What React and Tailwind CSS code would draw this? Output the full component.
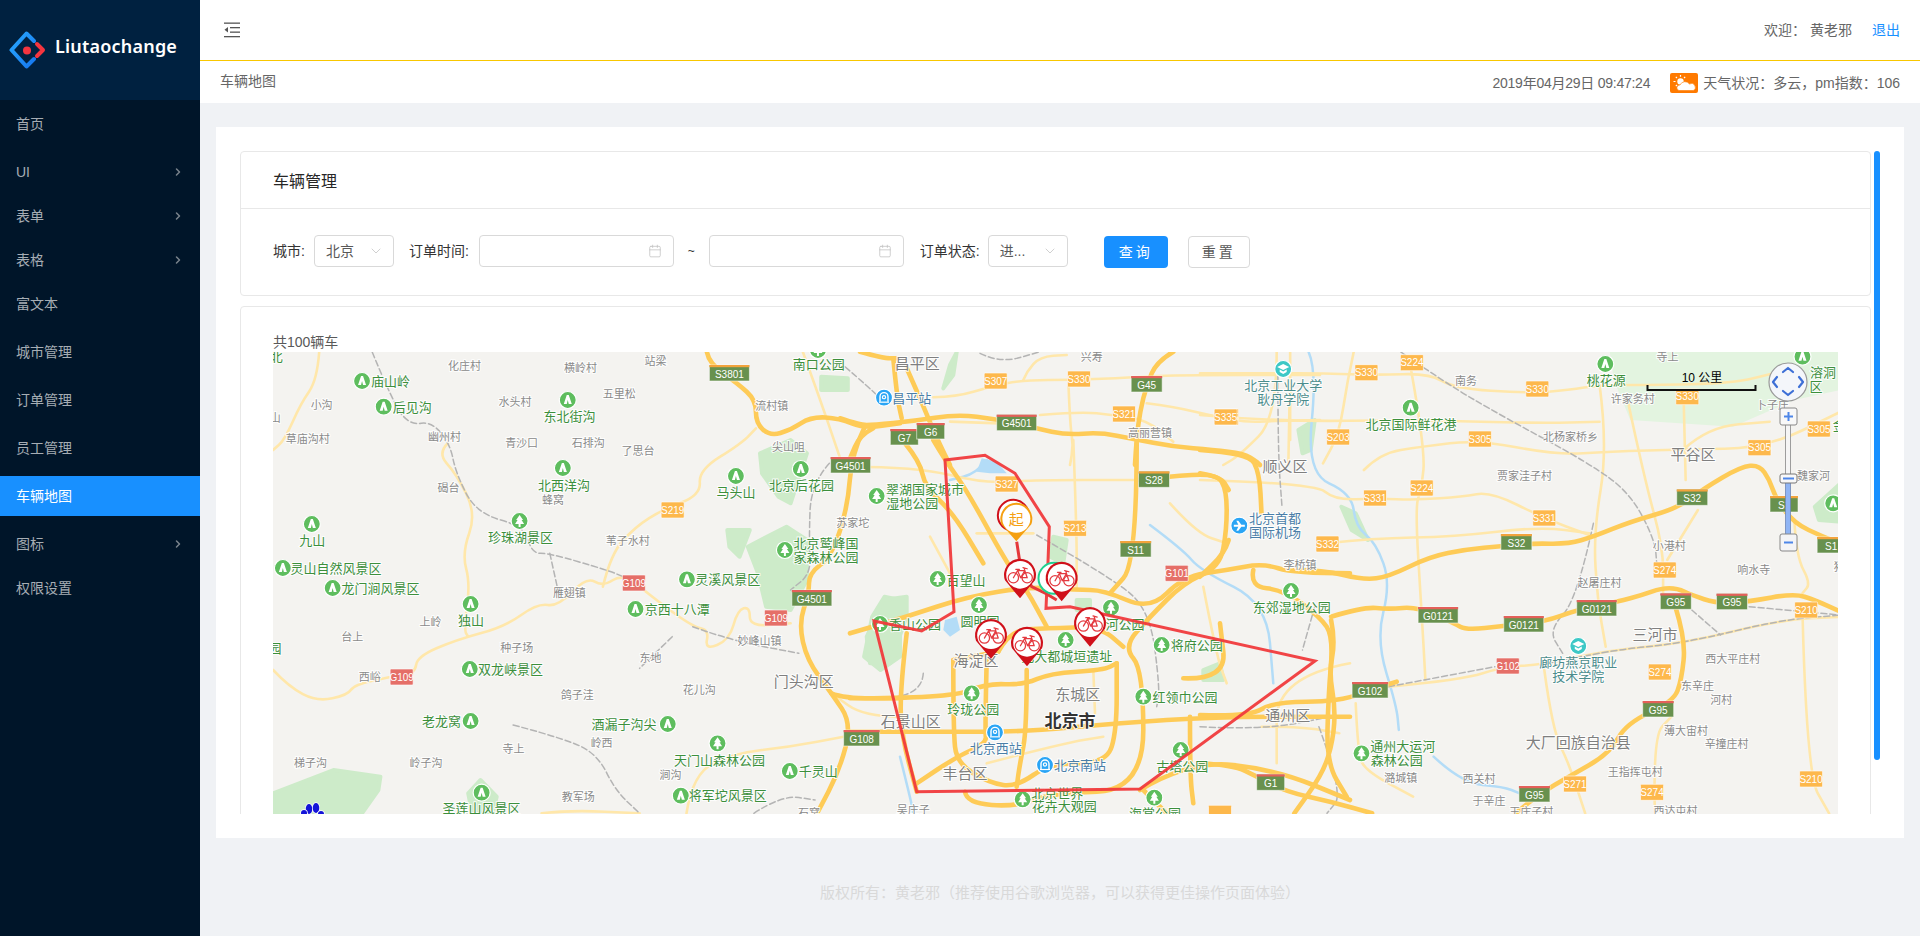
import { Calendar, ChevronDown, ChevronRight } from "lucide-react";

const menu = [
  { label: "首页", gap: "mb-2" },
  { label: "UI", arrow: true, gap: "mb-1" },
  { label: "表单", arrow: true, gap: "mb-1" },
  { label: "表格", arrow: true, gap: "mb-1" },
  { label: "富文本", gap: "mb-2" },
  { label: "城市管理", gap: "mb-2" },
  { label: "订单管理", gap: "mb-2" },
  { label: "员工管理", gap: "mb-2" },
  { label: "车辆地图", gap: "mb-2", active: true },
  { label: "图标", arrow: true, gap: "mb-1" },
  { label: "权限设置", gap: "mb-2" },
];

// the map is drawn in page pixels, read off four crops of the reference
const sheets = {
  a: { ox: 260, oy: 340, sx: 2.45 },
  b: { ox: 850, oy: 430, sx: 3 },
  c: { ox: 1200, oy: 340, sx: 2.44 },
  d: { ox: 840, oy: 345, sx: 3 },
};
const px = (s, x) => sheets[s].ox + x / sheets[s].sx;
const py = (s, y) => sheets[s].oy + y / 3;
const toPoints = (s, str) =>
  str
    .trim()
    .split(/\s+/)
    .map((p) => {
      const [x, y] = p.split(",").map(Number);
      return [px(s, x), py(s, y)];
    });
const pts = (s, str) =>
  toPoints(s, str)
    .map(([x, y]) => `${x.toFixed(1)},${y.toFixed(1)}`)
    .join(" ");

// rounds the corners of a polyline by curving through the segment midpoints
const curve = (s, str) => {
  const p = toPoints(s, str);
  if (p.length < 3) return `M${p[0][0]} ${p[0][1]} L${p[1][0]} ${p[1][1]}`;
  let d = `M${p[0][0].toFixed(1)} ${p[0][1].toFixed(1)}`;
  for (let i = 1; i < p.length - 1; i++) {
    const mx = (p[i][0] + p[i + 1][0]) / 2;
    const my = (p[i][1] + p[i + 1][1]) / 2;
    d += ` Q${p[i][0].toFixed(1)} ${p[i][1].toFixed(1)} ${mx.toFixed(1)} ${my.toFixed(1)}`;
  }
  const last = p[p.length - 1];
  return `${d} L${last[0].toFixed(1)} ${last[1].toFixed(1)}`;
};

const greens = [
  ["a", "1225,340 1300,300 1340,340 1300,490 1270,470 1230,400"],
  ["a", "1145,570 1200,570 1175,650 1150,620"],
  ["a", "1195,620 1290,560 1340,600 1340,720 1300,810 1240,800 1220,700"],
  ["a", "1500,830 1480,950 1520,990 1568,950 1568,780 1530,770"],
  ["a", "1375,110 1440,115 1440,150 1375,150"],
  ["a", "32,1360 180,1290 295,1310 290,1350 250,1420 32,1420"],
  ["a", "510,1360 540,1320 580,1370 570,1420 520,1420"],
  ["b", "100,510 170,500 170,560 120,700 60,700 50,620"],
  ["b", "1060,720 1110,700 1120,750 1060,750"],
  ["b", "610,320 650,330 640,400 600,380"],
  ["b", "680,510 720,510 720,550 680,540"],
  ["c", "1500,500 1563,430 1563,545 1510,540"],
  ["c", "240,270 280,240 270,330 250,340"],
  ["c", "345,500 380,520 410,600 370,570"],
  ["d", "310,130 330,60 350,22 340,90"],
];
const paleGreen = "1000,36 1563,36 1563,150 1450,180 1300,260 1050,240 1010,120";

const lakes = [
  ["b", "285,570 320,560 330,600 300,620 280,600"],
  ["b", "395,85 440,95 470,130 420,130 380,125"],
];

const rivers = [
  ["b", "410,90 380,130 300,150"],
  ["b", "900,285 1000,360 1050,420 1250,520 1270,760"],
  ["b", "150,980 180,1100 190,1150"],
  ["c", "265,36 285,90 260,400 370,460 380,560 430,610 465,730 430,900 480,1100 485,1170"],
  ["c", "570,1250 640,1330 740,1340 780,1360"],
];

const minorRoads = [
  ["a", "145,36 140,120 100,190 60,300 32,330"],
  ["a", "32,990 70,1040 140,1085 215,1065 230,1035 320,1010 380,1000 385,950 480,900 600,860 680,790 730,800 800,710 840,740 890,700 960,770 1060,860 1100,870 1090,930 1150,900 1170,810 1200,800 1200,860 1300,850"],
  ["a", "460,310 435,340 480,400 530,520 495,640 515,730 500,870 510,890"],
  ["a", "840,740 860,640 920,560 985,510 1080,465 1075,390 1180,310 1215,265"],
  ["a", "1330,36 1370,170 1420,350"],
  ["a", "1568,1130 1480,1130 1400,1060"],
  ["a", "1045,1420 1060,1300 1160,1240 1300,1220 1430,1190"],
  ["a", "690,1420 760,1410 930,1420"],
  ["b", "0,110 200,110 400,160 540,150 860,150"],
  ["b", "670,30 680,300 680,480"],
  ["b", "240,320 300,430"],
  ["b", "380,310 550,310"],
  ["b", "960,220 1040,310 1130,340"],
  ["b", "1060,470 1100,680 1130,760"],
  ["b", "730,720 735,850"],
  ["b", "1500,700 1280,740 1280,1000"],
  ["b", "410,1000 640,940 760,920"],
  ["c", "0,100 180,100 300,100 430,105 560,100 620,145 800,160 900,150 975,135 1100,135 1300,130 1400,100"],
  ["c", "0,225 180,245 540,240 830,250 975,245"],
  ["c", "400,390 440,340 540,320 680,300 870,345 1000,335 1180,328 1380,325 1563,215"],
  ["c", "1180,328 1240,260 1390,245"],
  ["c", "0,420 280,430 330,480 430,475 530,480 640,470 710,455 840,535 950,585"],
  ["c", "310,610 420,595 620,590 830,560 950,580"],
  ["c", "375,36 360,120 340,280 300,370"],
  ["c", "515,90 550,330 540,450 525,500 540,800 550,1020"],
  ["c", "975,135 995,320 960,580 970,780 990,920"],
  ["c", "1045,190 1085,420 1130,620 1130,760"],
  ["c", "1180,170 1185,420"],
  ["c", "1215,510 1140,660"],
  ["c", "460,1040 640,1020 740,980 830,975 1000,930 1180,910 1415,840 1563,830"],
  ["c", "840,990 860,1170 900,1270 940,1420"],
  ["c", "1110,1420 1105,1190 1150,1130"],
  ["c", "1470,820 1480,1300 1535,1420"],
  ["c", "1450,540 1455,650 1490,730 1470,760"],
  ["c", "220,36 220,300"],
  ["c", "380,1090 385,1230 400,1290 520,1370"],
  ["c", "150,1160 250,1160 340,1180"],
  ["d", "280,157 350,155 450,125 550,105 700,105 870,98 1000,90 1440,90"],
  ["d", "685,105 690,240 700,300 690,360"],
  ["d", "550,105 560,80 600,35 680,30"],
  ["d", "920,175 1000,185 1130,215 1220,232 1300,228 1440,225"],
  ["d", "600,210 720,200 820,210 920,225 1000,290"],
  ["d", "330,230 480,235"],
  ["d", "1350,100 1345,360"],
  ["d", "1310,20 1310,220 1200,330 1150,360"],
];

const majorRoads = [
  ["a", "1095,36 1100,70 1170,130 1215,180 1215,250 1250,288 1300,270 1350,230 1420,235 1480,265 1568,250"],
  ["a", "1480,265 1450,340 1440,500 1400,650 1345,700 1345,760 1320,850 1340,960 1400,1060 1450,1150 1420,1290 1365,1420"],
  ["a", "1400,1060 1430,1075 1568,1075"],
  ["b", "165,40 210,95 225,170 310,250 400,400"],
  ["b", "250,30 285,90 350,180 470,400 530,480 590,590"],
  ["b", "0,805 300,805 410,760 520,765 600,730 760,720 800,700"],
  ["b", "0,905 300,905 520,905 800,880 1100,860 1500,860"],
  ["b", "170,610 150,780 155,920 200,1085"],
  ["b", "410,690 405,900 410,940 320,980 200,1060"],
  ["b", "530,720 530,900 510,1000 500,1070"],
  ["b", "310,690 310,900 320,1000 420,1060 500,1070 600,1000 770,1000 800,900 800,700"],
  ["b", "345,1085 350,1120 500,1130 600,1090 880,1080 880,720 820,650 900,560 1000,460 1110,410 1130,300 1130,180 1100,130 950,140 860,150"],
  ["b", "445,665 480,600 590,595 750,590 820,650"],
  ["b", "310,690 445,665"],
  ["b", "860,40 860,400 780,490"],
  ["b", "1000,745 1130,750 1110,580"],
  ["b", "1210,420 1200,470 1300,480 1410,560 1450,620 1435,800 1430,1000 1490,1100"],
  ["b", "1500,430 1330,430 1240,400 1130,420 1000,440 900,540 760,480 680,480 540,470 350,500 170,560 0,610"],
  ["b", "1020,860 1020,1040 1030,1120"],
  ["b", "870,1080 1020,990 1280,1020 1500,1110"],
  ["b", "880,1080 950,1150"],
  ["c", "230,690 300,690 400,720 460,710 560,650 650,628 735,618 810,610 900,612 960,590 1050,545 1165,505 1230,445 1320,380 1365,375 1390,420 1405,475 1450,550 1520,590 1563,610"],
  ["c", "320,830 400,800 460,808 530,800 620,850 650,870 740,858 840,845 920,810 1020,785 1080,765 1125,745 1165,745 1200,765 1260,790 1340,785 1450,760 1500,780 1563,815"],
  ["c", "1160,800 1185,900 1175,1020 1155,1085 1040,1150 1000,1240 900,1310 830,1360 770,1420"],
  ["c", "320,840 330,900 315,1000 330,1100 325,1200 300,1300 230,1420"],
  ["c", "0,1125 120,1130 180,1085 340,1085 440,1040 480,1025"],
  ["c", "0,1270 80,1275 140,1310 210,1355 320,1385 420,1420"],
  ["c", "0,330 120,340 145,400 150,520"],
  ["c", "0,400 50,410 70,450"],
  ["c", "70,600 60,640 0,710"],
  ["d", "0,220 60,240 100,240 220,228 350,208 470,222 590,250 680,270 780,262 880,282 1000,305 1120,315 1210,325 1250,350 1260,360"],
  ["d", "1000,20 950,50 920,120 900,200 890,280 885,360"],
  ["d", "160,40 170,150 185,220"],
  ["d", "200,70 240,160 265,220 300,300 330,360"],
  ["d", "100,250 60,270 30,340"],
  ["d", "60,20 130,40 170,40"],
];

const rails = [
  ["a", "275,36 330,200 370,255 420,245 465,310 480,400 530,520 650,560 665,640 710,640 850,690 890,710"],
  ["a", "710,640 730,750"],
  ["a", "1010,890 930,985"],
  ["a", "1060,860 1150,900 1320,940"],
  ["a", "620,1155 760,1200 830,1250 870,1350 930,1420"],
  ["a", "1395,370 1350,430 1345,600 1350,700 1300,750"],
  ["a", "1210,1420 1280,1365 1360,1380"],
  ["b", "560,315 780,440 900,540 930,780 920,830"],
  ["b", "220,730 215,800 0,805"],
  ["c", "490,36 600,130 740,230 950,370 1050,460 1110,600 1115,680"],
  ["c", "190,100 190,330 200,500"],
  ["c", "960,550 920,780 850,870 885,940"],
  ["c", "460,1040 720,980"],
  ["c", "830,975 1000,930 1180,910 1415,840 1563,825"],
  ["c", "1340,800 1560,825"],
  ["c", "1200,810 1270,885"],
  ["c", "280,800 250,930"],
  ["c", "0,1160 150,1170 320,1130"],
  ["c", "290,1160 350,1360 310,1420"],
  ["d", "15,65 90,130 130,170"],
  ["d", "420,25 480,55 600,20"],
];

// [sheet, text, x, y]
const villages = [
  ["a", "化庄村", 501, 79], ["a", "横岭村", 785, 85], ["a", "站梁", 969, 62], ["a", "小沟", 151, 195],
  ["a", "水头村", 625, 187], ["a", "五里松", 880, 163], ["a", "草庙沟村", 117, 298], ["a", "幽州村", 452, 292],
  ["a", "青沙口", 641, 310], ["a", "石排沟", 804, 309], ["a", "了思台", 926, 332], ["a", "尖山咀", 1295, 322],
  ["a", "流村镇", 1254, 199], ["a", "碣台", 462, 445], ["a", "蜂窝", 718, 481], ["a", "苏家坨", 1452, 549],
  ["a", "苇子水村", 901, 602], ["a", "雁翅镇", 758, 760], ["a", "上岭", 418, 846], ["a", "台上", 226, 892],
  ["a", "妙峰山镇", 1224, 903], ["a", "种子场", 629, 923], ["a", "东地", 957, 953], ["a", "西峪", 269, 1012],
  ["a", "鸽子洼", 777, 1065], ["a", "花儿沟", 1076, 1051], ["a", "寺上", 621, 1226], ["a", "岭西", 837, 1208],
  ["a", "梯子沟", 124, 1268], ["a", "岭子沟", 407, 1268], ["a", "涧沟", 1006, 1306], ["a", "教军场", 780, 1370],
  ["a", "石窝", 1345, 1418], ["b", "李桥镇", 1350, 405], ["b", "吴庄子", 190, 1140],
  ["d", "兴寿", 755, 35], ["d", "高丽营镇", 930, 265],
  ["c", "南务", 649, 124], ["c", "许家务村", 1056, 177], ["c", "卜子庄", 1397, 195], ["c", "寺上", 1141, 50],
  ["c", "北杨家桥乡", 904, 292], ["c", "贾家洼子村", 792, 407], ["c", "魏家河", 1497, 408], ["c", "小港村", 1145, 618],
  ["c", "响水寺", 1351, 690], ["c", "赵屠庄村", 975, 730], ["c", "西大平庄村", 1300, 957], ["c", "东辛庄", 1214, 1037],
  ["c", "河村", 1272, 1080], ["c", "薄大宙村", 1186, 1172], ["c", "辛撞庄村", 1285, 1213], ["c", "王指挥屯村", 1062, 1297],
  ["c", "潞城镇", 490, 1314], ["c", "西关村", 681, 1317], ["c", "于辛庄", 705, 1382], ["c", "王庄子村", 808, 1415],
  ["c", "西达屯村", 1160, 1412], ["c", "猪", 1560, 680],
  ["a", "东山", 24, 233],
];

const districts = [
  ["a", "门头沟区", 1332, 1025], ["b", "顺义区", 1305, 108], ["b", "海淀区", 378, 690], ["b", "东城区", 683, 793],
  ["b", "石景山区", 182, 873], ["b", "丰台区", 345, 1030], ["b", "通州区", 1313, 857], ["d", "昌平区", 232, 55],
  ["c", "平谷区", 1203, 343], ["c", "三河市", 1110, 882], ["c", "大厂回族自治县", 923, 1208],
];

// green names with no icon of their own in view, cut off by the map edge
const edgeNames = [
  ["a", "北", 40, 50], ["a", "园", 37, 925], ["c", "区", 1503, 140], ["c", "金", 1560, 255],
];

// [sheet, kind, icon x, icon y, [[text, x, y], ...]]
const pois = [
  ["a", "m", 250, 123, [["庙山岭", 320, 123]]],
  ["a", "m", 303, 200, [["后见沟", 373, 203]]],
  ["a", "m", 754, 180, [["东北街沟", 758, 229]]],
  ["a", "m", 742, 384, [["北西洋沟", 745, 435]]],
  ["a", "m", 1166, 408, [["马头山", 1166, 457]]],
  ["a", "m", 1325, 387, [["北京后花园", 1327, 436]]],
  ["a", "m", 127, 552, [["九山", 128, 601]]],
  ["a", "t", 636, 543, [["珍珠湖景区", 638, 593]]],
  ["a", "m", 56, 684, [["灵山自然风景区", 186, 685]]],
  ["a", "m", 178, 744, [["龙门涧风景区", 295, 744]]],
  ["a", "m", 516, 792, [["独山", 517, 842]]],
  ["a", "m", 1046, 718, [["灵溪风景区", 1146, 718]]],
  ["a", "m", 920, 807, [["京西十八潭", 1022, 808]]],
  ["a", "m", 514, 987, [["双龙峡景区", 614, 987]]],
  ["a", "m", 516, 1143, [["老龙窝", 445, 1145]]],
  ["a", "m", 999, 1152, [["酒漏子沟尖", 892, 1153]]],
  ["a", "t", 1121, 1210, [["天门山森林公园", 1126, 1260]]],
  ["a", "m", 1298, 1293, [["千灵山", 1368, 1293]]],
  ["a", "m", 1031, 1367, [["将军坨风景区", 1146, 1367]]],
  ["a", "m", 543, 1358, [["圣莲山风景区", 543, 1406]]],
  ["a", "t", 1286, 630, [["北京鹫峰国", 1387, 610], ["家森林公园", 1387, 653]]],
  ["a", "t", 1367, 30, [["南口公园", 1369, 74]]],
  ["b", "t", 80, 198, [["翠湖国家城市", 225, 178], ["湿地公园", 187, 220]]],
  ["b", "t", 263, 447, [["百望山", 348, 450]]],
  ["b", "t", 387, 525, [["圆明园", 390, 575]]],
  ["b", "t", 90, 582, [["香山公园", 195, 582]]],
  ["b", "t", 783, 533, [["河公园", 825, 582]]],
  ["b", "t", 935, 645, [["将府公园", 1040, 647]]],
  ["b", "t", 647, 630, [["元大都城垣遗址", 650, 680]]],
  ["b", "t", 1323, 483, [["东郊湿地公园", 1325, 532]]],
  ["b", "t", 365, 790, [["玲珑公园", 370, 838]]],
  ["b", "t", 880, 800, [["红领巾公园", 1005, 802]]],
  ["b", "t", 992, 960, [["古塔公园", 997, 1010]]],
  ["b", "t", 518, 1108, [["北京世界", 622, 1090], ["花卉大观园", 643, 1130]]],
  ["b", "t", 913, 1103, [["海棠公园", 915, 1150]]],
  ["c", "m", 989, 72, [["桃花源", 991, 122]]],
  ["c", "m", 514, 203, [["北京国际鲜花港", 515, 253]]],
  ["c", "t", 394, 1240, [["通州大运河", 495, 1218], ["森林公园", 480, 1261]]],
  ["c", "m", 1545, 490, []],
  ["c", "m", 1470, 50, [["溶洞", 1520, 98]]],
  ["b", "plane", 1168, 287, [["北京首都", 1275, 265], ["国际机场", 1275, 308]]],
  ["b", "station", 435, 907, [["北京西站", 437, 955]]],
  ["b", "station", 585, 1005, [["北京南站", 690, 1007]]],
  ["d", "station", 132, 158, [["昌平站", 215, 160]]],
  ["c", "school", 203, 87, [["北京工业大学", 203, 135], ["耿丹学院", 203, 178]]],
  ["c", "school", 923, 918, [["廊坊燕京职业", 923, 967], ["技术学院", 923, 1010]]],
];

// [sheet, kind, text, x, y]; y yellow, g green, s green with orange stripe, r red
const shields = [
  ["a", "s", "S3801", 1150, 99], ["a", "g", "G4501", 1447, 375], ["a", "y", "S219", 1011, 510], ["a", "r", "G109", 916, 729],
  ["a", "g", "G4501", 1352, 774], ["a", "r", "G109", 1264, 834], ["a", "r", "G109", 347, 1011], ["a", "g", "G108", 1474, 1194],
  ["b", "y", "S327", 470, 162], ["b", "y", "S213", 675, 295], ["b", "s", "S28", 912, 148], ["b", "s", "S11", 857, 357],
  ["b", "r", "G101", 980, 430], ["b", "g", "G1", 1262, 1057], ["b", "y", "", 1110, 1150],
  ["c", "y", "S330", 406, 98], ["c", "y", "S224", 517, 68], ["c", "y", "S330", 823, 147], ["c", "y", "S335", 66, 231],
  ["c", "y", "S203", 337, 291], ["c", "y", "S305", 683, 297], ["c", "y", "S330", 1189, 170], ["c", "y", "S305", 1510, 267],
  ["c", "y", "S305", 1365, 323], ["c", "y", "S224", 541, 444], ["c", "y", "S331", 427, 474], ["c", "y", "S331", 840, 534],
  ["c", "y", "S332", 311, 612], ["c", "s", "S32", 772, 606], ["c", "s", "S32", 1201, 472], ["c", "s", "S1", 1425, 492],
  ["c", "s", "S1", 1540, 615], ["c", "y", "S274", 1134, 690], ["c", "g", "G0121", 581, 825], ["c", "g", "G0121", 790, 852],
  ["c", "g", "G0121", 968, 804], ["c", "g", "G95", 1161, 784], ["c", "g", "G95", 1298, 785], ["c", "y", "S210", 1479, 810],
  ["c", "y", "S274", 1122, 996], ["c", "r", "G102", 751, 978], ["c", "g", "G102", 415, 1050], ["c", "g", "G95", 1118, 1107],
  ["c", "y", "S271", 915, 1332], ["c", "g", "G95", 816, 1362], ["c", "y", "S274", 1103, 1357], ["c", "y", "S210", 1491, 1317],
  ["d", "g", "G4501", 530, 233], ["d", "y", "S307", 467, 108], ["d", "y", "S330", 717, 102], ["d", "g", "G45", 920, 117],
  ["d", "y", "S321", 852, 207], ["d", "y", "S335", 1157, 216], ["d", "g", "G7", 193, 276], ["d", "g", "G6", 272, 258],
];

const mapFont = '"Liberation Sans", "Noto Sans CJK SC", sans-serif';

function Lines({ list, stroke, width, dash }) {
  return list.map(([s, p], i) => (
    <path
      key={i}
      d={curve(s, p)}
      fill="none"
      stroke={stroke}
      strokeWidth={width}
      strokeDasharray={dash}
      strokeLinecap="round"
      strokeLinejoin="round"
    />
  ));
}

function Label({ x, y, size, color, weight, children }) {
  return (
    <text
      x={x}
      y={y}
      fontSize={size}
      fontWeight={weight}
      fill={color}
      textAnchor="middle"
      dominantBaseline="central"
      stroke="#fff"
      strokeWidth="2"
      strokeOpacity="0.85"
      paintOrder="stroke"
      fontFamily={mapFont}
    >
      {children}
    </text>
  );
}

function PoiIcon({ x, y, kind }) {
  const fill = { m: "#5ebd5e", t: "#5ebd5e", plane: "#2aa5f5", station: "#2aa5f5", school: "#3cc8c6" }[kind];
  return (
    <g transform={`translate(${x} ${y})`}>
      <circle r="8.5" fill={fill} stroke="#fff" strokeWidth="1.2" />
      {kind === "m" && <path d="M-4 4 L-1 -5 L1 -5 L4 4 L1 4 L0 0 L-1 4 Z" fill="#fff" />}
      {kind === "t" && <path d="M0 -6 L3.5 -1 L2 -1 L4.5 3 L1 3 L1 6 L-1 6 L-1 3 L-4.5 3 L-2 -1 L-3.5 -1 Z" fill="#fff" />}
      {kind === "plane" && <path d="M-5.5 -1 L-1 -1 L-3 -5 L-1 -5 L2 -1 L5.5 -1 L5.5 1 L2 1 L-1 5 L-3 5 L-1 1 L-5.5 1 Z" fill="#fff" />}
      {kind === "station" && (
        <g fill="none" stroke="#fff">
          <path d="M-4 4 V-1 A4 4 0 0 1 4 -1 V4" strokeWidth="1.4" />
          <circle cy="-0.5" r="1.6" strokeWidth="1.2" />
          <path d="M-5 4.5 H5" strokeWidth="1.2" />
        </g>
      )}
      {kind === "school" && (
        <g fill="#fff">
          <path d="M0 -5 L6 -2 L0 1 L-6 -2 Z" />
          <path d="M-3.5 0.5 L0 2.4 L3.5 0.5 V3 L0 5 L-3.5 3 Z" />
        </g>
      )}
    </g>
  );
}

function Shield({ x, y, kind, text }) {
  if (kind === "y" || kind === "r") {
    return (
      <g>
        <rect x={x - 11.5} y={y - 8} width="23" height="16" rx="1" fill={kind === "y" ? "#fdb84c" : "#e56f68"} stroke="#fff" strokeOpacity="0.6" />
        <text x={x} y={y} fontSize="10" fill="#fff" textAnchor="middle" dominantBaseline="central" fontFamily={mapFont}>
          {text}
        </text>
      </g>
    );
  }
  const w = text.length >= 5 ? 40 : text.length === 4 ? 36 : text.length === 3 ? 31 : 28;
  return (
    <g>
      <rect x={x - w / 2} y={y - 8} width={w} height="16" fill="#68914e" stroke="#fff" strokeOpacity="0.55" />
      <rect x={x - w / 2} y={y - 8} width={w} height="2.2" fill={kind === "g" ? "#e4605a" : "#f2a33c"} />
      <text x={x} y={y + 1} fontSize="10" fill="#fff" textAnchor="middle" dominantBaseline="central" fontFamily={mapFont}>
        {text}
      </text>
    </g>
  );
}

function BikePin({ x, y }) {
  return (
    <g transform={`translate(${x} ${y})`}>
      <path d="M-15 5 A16 16 0 1 1 15 5 L0 23 Z" fill="#d0101a" />
      <circle cy="-0.5" r="13.8" fill="#fff" />
      <g transform="scale(1.2)" fill="none" stroke="#e43a40" strokeWidth="1.05" strokeLinecap="round" strokeLinejoin="round">
        <circle cx="-5.5" cy="2" r="4.3" />
        <circle cx="6" cy="2" r="4.3" />
        <path d="M-5.5 2 L-2 -4 L4 -4 L6 2 M-2 -4 L0.5 2 L6 2 M0.5 2 L4 -4 M3.5 -6 L4 -4 M-3.5 -5 L-0.5 -5 M2.5 -6.5 L6 -5.5" />
      </g>
    </g>
  );
}

function MapControls() {
  return (
    <g>
      <path d="M1647.5 385 V390 H1755.5 V385" fill="none" stroke="#111" strokeWidth="2" />
      <text x="1702" y="378" fontSize="12" fill="#000" textAnchor="middle" dominantBaseline="central" fontFamily={mapFont}>
        10 公里
      </text>
      <circle cx="1788" cy="382" r="19" fill="#f4f6fa" stroke="#999" strokeWidth="1.2" />
      <g fill="none" stroke="#3d6fd6" strokeWidth="2.2" strokeLinecap="round" strokeLinejoin="round">
        <path d="M1783 372 L1788 368 L1793 372" />
        <path d="M1783 391 L1788 395 L1793 391" />
        <path d="M1777 377 L1773 382 L1777 387" />
        <path d="M1799 377 L1803 382 L1799 387" />
      </g>
      <rect x="1785.5" y="420" width="5" height="60" fill="#f5f5f5" stroke="#888" strokeWidth="0.8" />
      <rect x="1785.5" y="480" width="5" height="56" fill="#8fb4f4" stroke="#6f87b5" strokeWidth="0.8" />
      <rect x="1780" y="408" width="17" height="17" rx="2" fill="#f8f8f8" stroke="#888" />
      <path d="M1784 416.5 H1793 M1788.5 412 V421" stroke="#4e86e8" strokeWidth="2" />
      <rect x="1780" y="474" width="17" height="9" rx="2" fill="#f8f8f8" stroke="#777" />
      <path d="M1783 478.5 H1794" stroke="#4e86e8" strokeWidth="2" />
      <rect x="1780" y="534" width="17" height="17" rx="2" fill="#f4f4f6" stroke="#888" />
      <path d="M1784 542.5 H1793" stroke="#4e86e8" strokeWidth="2" />
    </g>
  );
}

function BeijingMap() {
  return (
    <svg viewBox="273 352 1565 462" className="block h-full w-full">
      <rect x="273" y="352" width="1565" height="462" fill="#f4f3f0" />
      <polygon points={pts("c", paleGreen)} fill="#e3f4e0" />
      {greens.map(([s, p], i) => (
        <polygon key={i} points={pts(s, p)} fill="#cdebc9" stroke="#cdebc9" strokeWidth="4" strokeLinejoin="round" />
      ))}
      {lakes.map(([s, p], i) => (
        <polygon key={i} points={pts(s, p)} fill="#b3dcf7" />
      ))}
      <Lines list={rivers} stroke="#b3dcf7" width="2.5" />
      <Lines list={minorRoads} stroke="#ffe7aa" width="2.6" />
      <Lines list={rails} stroke="#b4b4b4" width="1.5" dash="6 3" />
      <Lines list={majorRoads} stroke="#fecb57" width="4.6" />

      {villages.map(([s, t, x, y], i) => (
        <Label key={i} x={px(s, x)} y={py(s, y)} size="11" color="#8a8a8a">
          {t}
        </Label>
      ))}
      {districts.map(([s, t, x, y], i) => (
        <Label key={i} x={px(s, x)} y={py(s, y)} size="15" color="#7f7f7f">
          {t}
        </Label>
      ))}
      {edgeNames.map(([s, t, x, y], i) => (
        <Label key={i} x={px(s, x)} y={py(s, y)} size="13" color="#3c8f3c">
          {t}
        </Label>
      ))}
      <Label x={px("b", 660)} y={py("b", 873)} size="17" weight="600" color="#333">
        北京市
      </Label>
      {pois.map(([s, kind, ix, iy, lines], i) => (
        <g key={i}>
          <PoiIcon x={px(s, ix)} y={py(s, iy)} kind={kind} />
          {lines.map(([t, x, y]) => (
            <Label
              key={t}
              x={px(s, x)}
              y={py(s, y)}
              size="13"
              color={kind === "m" || kind === "t" ? "#3c8f3c" : kind === "school" ? "#4b8c8c" : "#4a7ea8"}
            >
              {t}
            </Label>
          ))}
        </g>
      ))}
      {shields.map(([s, kind, t, x, y], i) => (
        <Shield key={i} x={px(s, x)} y={py(s, y)} kind={kind} text={t} />
      ))}

      <polygon
        points={pts("b", "285,90 405,76 495,130 598,290 593,420 588,535 660,530 1395,693 870,1077 200,1085 72,573 215,603 312,545")}
        fill="none"
        stroke="#f03a3c"
        strokeOpacity="0.95"
        strokeWidth="3"
      />
      <polyline points={pts("b", "500,335 510,400 545,470 590,492 620,510")} fill="none" stroke="#e5383b" strokeWidth="3" />

      <circle cx={px("b", 490)} cy={py("b", 256)} r="15.5" fill="#fff" stroke="#d0101a" strokeWidth="2" />
      <g transform={`translate(${px("b", 499)} ${py("b", 268)})`}>
        <path d="M-15 5 A16 16 0 1 1 15 5 L0 22 Z" fill="#f5a011" />
        <circle cy="-0.5" r="14" fill="#fff" />
        <text y="0" fontSize="15" fill="#f5a011" textAnchor="middle" dominantBaseline="central" fontFamily={mapFont}>
          起
        </text>
      </g>
      <circle cx={px("b", 612)} cy={py("b", 445)} r="15.5" fill="#fff" stroke="#1fd08f" strokeWidth="2" />
      <BikePin x={px("b", 510)} y={py("b", 436)} />
      <BikePin x={px("b", 635)} y={py("b", 445)} />
      <BikePin x={px("b", 720)} y={py("b", 581)} />
      <BikePin x={px("b", 423)} y={py("b", 617)} />
      <BikePin x={px("b", 531)} y={py("b", 640)} />

      <g fill="#1414d8" stroke="#fff" strokeWidth="1.5" paintOrder="stroke">
        <ellipse cx="309" cy="809" rx="3.3" ry="5" />
        <ellipse cx="316" cy="808" rx="3.3" ry="5" />
        <circle cx="304" cy="813" r="3" />
        <circle cx="321" cy="814" r="3" />
      </g>
      <MapControls />
    </svg>
  );
}

function Logo() {
  return (
    <svg width="38" height="38" viewBox="0 0 38 38" className="shrink-0">
      <defs>
        <linearGradient id="logoBlue" x1="0" y1="0" x2="1" y2="1">
          <stop offset="0" stopColor="#29a9ff" />
          <stop offset="1" stopColor="#1677ee" />
        </linearGradient>
      </defs>
      <path d="M25 10 L17.5 2.5 L2.5 19 L17.5 35.5 L25 28" fill="none" stroke="url(#logoBlue)" strokeWidth="4" strokeLinejoin="round" strokeLinecap="round" />
      <path d="M28 13 L34 19 L28 25" fill="none" stroke="#f5353f" strokeWidth="4" strokeLinejoin="round" strokeLinecap="round" />
      <circle cx="18" cy="19.5" r="4" fill="#f5353f" />
    </svg>
  );
}

function CollapseIcon() {
  return (
    <svg width="16" height="16" viewBox="0 0 16 16" fill="#555" className="block">
      <rect x="0" y="0.5" width="16" height="1.3" />
      <rect x="6" y="5" width="10" height="1.3" />
      <rect x="6" y="9.5" width="10" height="1.3" />
      <rect x="0" y="14" width="16" height="1.3" />
      <path d="M0.5 7.7 L4 5 V10.5 Z" />
    </svg>
  );
}

function WeatherIcon() {
  return (
    <svg width="28" height="20" viewBox="0 0 28 20" className="block">
      <rect width="28" height="20" rx="2" fill="#ff7a00" />
      <circle cx="10.5" cy="8.5" r="3.2" fill="#fff" />
      <path d="M10.5 2 V3.8 M5.5 8.5 H3.5 M7 5 L5.8 3.8 M7 12 L5.8 13.2 M14 5 L15.2 3.8" stroke="#fff" strokeWidth="1.2" />
      <path d="M9 17.5 A2.8 2.8 0 0 1 10 12 A5.5 5.5 0 0 1 19.5 11 A3.4 3.4 0 0 1 23.5 17.5 Z" fill="#fff" stroke="#ff7a00" strokeWidth="0.6" />
    </svg>
  );
}

function SelectBox({ value }) {
  return (
    <div className="flex h-8 w-20 items-center justify-between rounded border border-[#d9d9d9] bg-white pl-[11px] pr-[9px] text-sm text-[#595959]">
      <span>{value}</span>
      <ChevronDown size={16} strokeWidth={1.1} className="text-[#bfbfbf]" />
    </div>
  );
}

function DateBox() {
  return (
    <div className="flex h-8 w-[195px] items-center justify-end rounded border border-[#d9d9d9] bg-white pr-[11px]">
      <Calendar size={14} strokeWidth={1.3} className="text-[#bfbfbf]" />
    </div>
  );
}

export default function App() {
  return (
    <div className="flex h-screen overflow-hidden bg-[#f0f2f5] font-['Liberation_Sans','Noto_Sans_CJK_SC',sans-serif]">
      <aside className="w-[200px] shrink-0 bg-[#001529]">
        <div className="flex h-[100px] items-center bg-[#002140] pl-[9px]">
          <Logo />
          <span className="ml-[8px] -translate-y-[4px] font-['Noto_Sans'] text-lg font-semibold tracking-[0.2px] text-white">Liutaochange</span>
        </div>
        <ul className="mt-1">
          {menu.map((item) => (
            <li
              key={item.label}
              className={`flex h-10 items-center justify-between pl-4 pr-[16px] text-sm ${item.gap} ${
                item.active ? "bg-[#1890ff] text-white" : "text-[#a6adb4]"
              }`}
            >
              <span>{item.label}</span>
              {item.arrow && <ChevronRight size={12} strokeWidth={3} className="text-[#79838c]" />}
            </li>
          ))}
        </ul>
      </aside>

      <div className="flex min-w-0 flex-1 flex-col">
        <header className="flex h-[61px] shrink-0 items-center justify-between border-b border-[#f9c700] bg-white pl-6 pr-5">
          <CollapseIcon />
          <div className="flex items-center text-sm text-[#666]">
            <span>欢迎： 黄老邪</span>
            <a className="ml-5 text-[#1890ff]">退出</a>
          </div>
        </header>
        <div className="flex h-[42px] shrink-0 items-center justify-between bg-white pl-5 pr-5 text-sm text-[#666]">
          <span className="mb-[2px]">车辆地图</span>
          <div className="mt-[2px] flex items-center">
            <span className="tracking-[-0.25px]">2019年04月29日 09:47:24</span>
            <span className="ml-5 mr-[5px]">
              <WeatherIcon />
            </span>
            <span>天气状况：多云，pm指数：106</span>
          </div>
        </div>

        <main className="mx-4 mt-6 h-[711px] shrink-0 bg-white p-6">
          <div className="relative h-[663px] overflow-hidden">
            <div className="absolute right-0 top-0 h-[609px] w-[6px] rounded-[3px] bg-[#1890ff]" />
            <div className="mr-[9px]">
              <section className="rounded-sm border border-[#e8e8e8]">
                <h2 className="flex h-[57px] items-center border-b border-[#e8e8e8] pl-8 pt-[3px] text-base font-normal text-[#262626]">车辆管理</h2>
                <div className="flex h-[86px] items-center pb-[2px] pl-8 text-sm text-[#333]">
                  <span className="mr-[9px]">城市:</span>
                  <SelectBox value="北京" />
                  <span className="ml-[15px] mr-[10px]">订单时间:</span>
                  <DateBox />
                  <span className="mx-[12px] w-[11px] text-center text-xs">~</span>
                  <DateBox />
                  <span className="ml-[16px] mr-[8px]">订单状态:</span>
                  <SelectBox value="进..." />
                  <button className="ml-9 mt-[2px] h-8 w-16 rounded bg-[#1890ff] text-sm tracking-[3px] text-white">查询</button>
                  <button className="ml-[20px] mt-[2px] h-8 w-[62px] rounded border border-[#d9d9d9] bg-white text-sm tracking-[3px] text-[#595959]">重置</button>
                </div>
              </section>
              <section className="mt-[10px] rounded-sm border border-[#e8e8e8] px-8 pb-8 pt-[25px]">
                <div className="h-5 text-sm leading-5 text-[#595959]">共100辆车</div>
                <div className="h-[462px] bg-[#f4f3f0]">
                  <BeijingMap />
                </div>
              </section>
            </div>
          </div>
        </main>

        <footer className="flex flex-1 items-center justify-center pt-3 text-[15px] text-[#d9d9d9]">
          版权所有：黄老邪（推荐使用谷歌浏览器，可以获得更佳操作页面体验）
        </footer>
      </div>
    </div>
  );
}
